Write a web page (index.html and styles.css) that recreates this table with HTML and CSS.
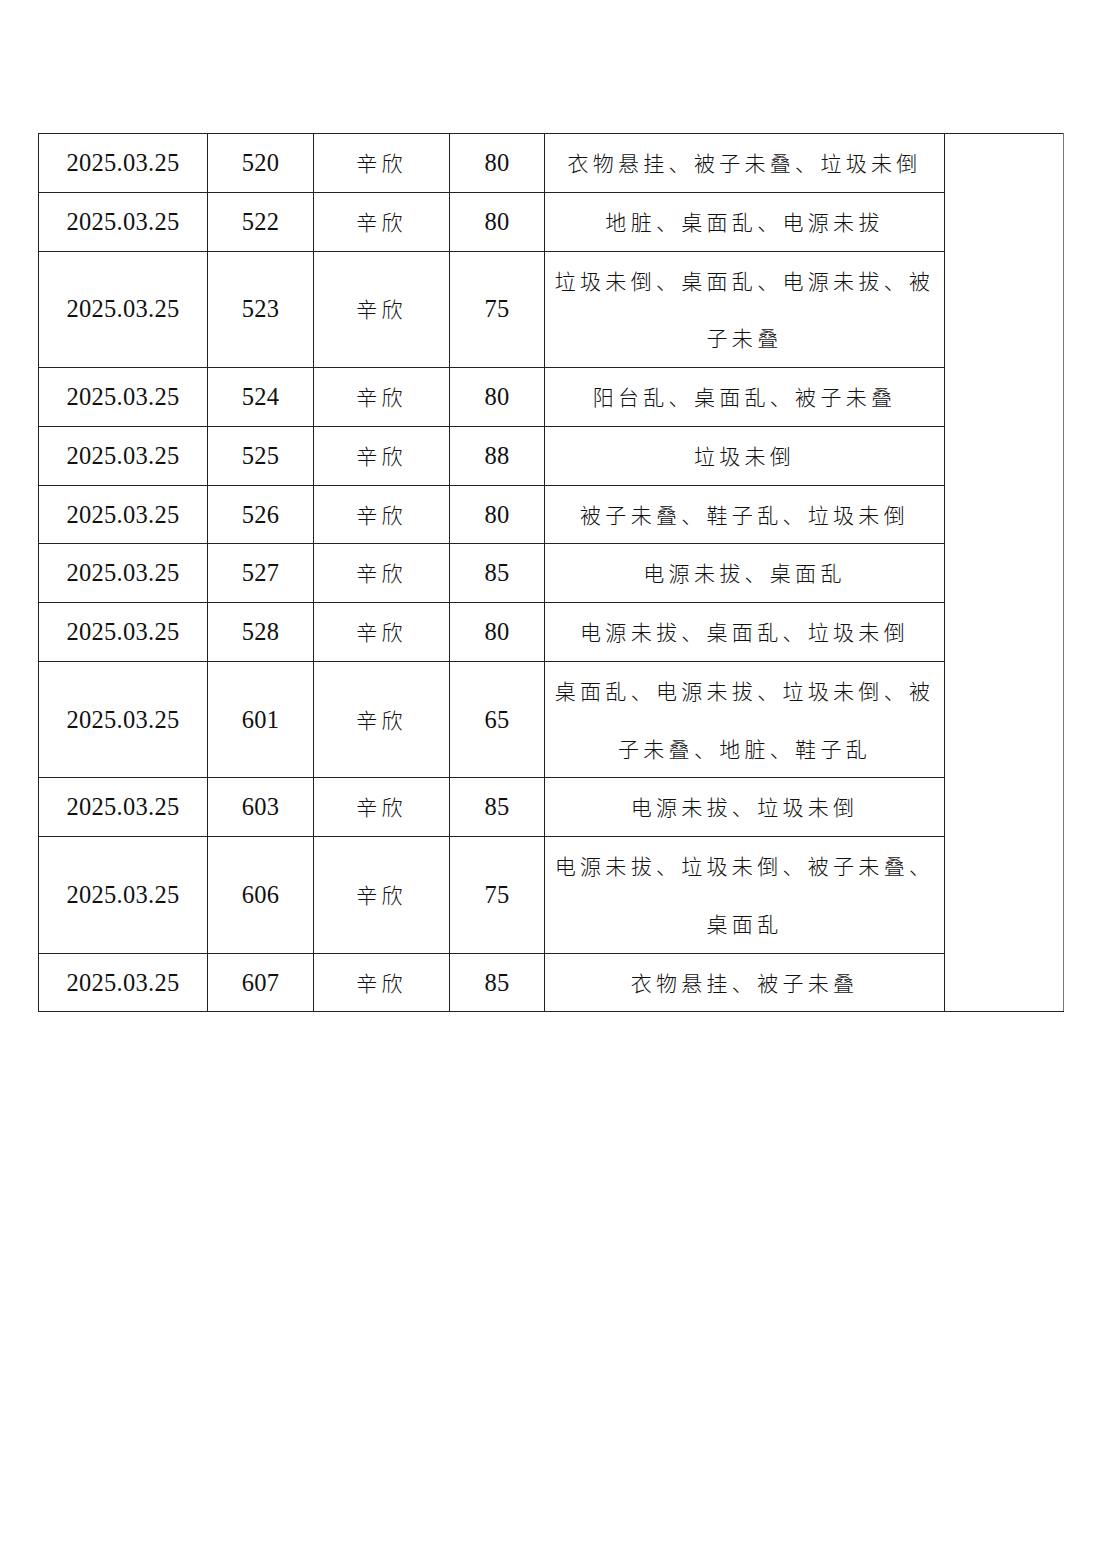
FILE: index.html
```html
<!DOCTYPE html>
<html>
<head>
<meta charset="utf-8">
<title>宿舍检查记录</title>
<link rel="stylesheet" href="styles.css">
</head>
<body>
<div class="page">
<table class="sheet">
  <colgroup>
    <col class="c-date"><col class="c-room"><col class="c-name"><col class="c-score"><col class="c-note"><col class="c-extra">
  </colgroup>
  <tbody>
    <tr><td class="num">2025.03.25</td><td class="num">520</td><td class="cjk">辛欣</td><td class="num">80</td><td class="cjk note">衣物悬挂、被子未叠、垃圾未倒</td><td class="extra" rowspan="12"></td></tr>
    <tr><td class="num">2025.03.25</td><td class="num">522</td><td class="cjk">辛欣</td><td class="num">80</td><td class="cjk note">地脏、桌面乱、电源未拔</td></tr>
    <tr><td class="num">2025.03.25</td><td class="num">523</td><td class="cjk">辛欣</td><td class="num">75</td><td class="cjk note">垃圾未倒、桌面乱、电源未拔、被子未叠</td></tr>
    <tr><td class="num">2025.03.25</td><td class="num">524</td><td class="cjk">辛欣</td><td class="num">80</td><td class="cjk note">阳台乱、桌面乱、被子未叠</td></tr>
    <tr><td class="num">2025.03.25</td><td class="num">525</td><td class="cjk">辛欣</td><td class="num">88</td><td class="cjk note">垃圾未倒</td></tr>
    <tr><td class="num">2025.03.25</td><td class="num">526</td><td class="cjk">辛欣</td><td class="num">80</td><td class="cjk note">被子未叠、鞋子乱、垃圾未倒</td></tr>
    <tr><td class="num">2025.03.25</td><td class="num">527</td><td class="cjk">辛欣</td><td class="num">85</td><td class="cjk note">电源未拔、桌面乱</td></tr>
    <tr><td class="num">2025.03.25</td><td class="num">528</td><td class="cjk">辛欣</td><td class="num">80</td><td class="cjk note">电源未拔、桌面乱、垃圾未倒</td></tr>
    <tr><td class="num">2025.03.25</td><td class="num">601</td><td class="cjk">辛欣</td><td class="num">65</td><td class="cjk note">桌面乱、电源未拔、垃圾未倒、被子未叠、地脏、鞋子乱</td></tr>
    <tr><td class="num">2025.03.25</td><td class="num">603</td><td class="cjk">辛欣</td><td class="num">85</td><td class="cjk note">电源未拔、垃圾未倒</td></tr>
    <tr><td class="num">2025.03.25</td><td class="num">606</td><td class="cjk">辛欣</td><td class="num">75</td><td class="cjk note">电源未拔、垃圾未倒、被子未叠、桌面乱</td></tr>
    <tr><td class="num">2025.03.25</td><td class="num">607</td><td class="cjk">辛欣</td><td class="num">85</td><td class="cjk note">衣物悬挂、被子未叠</td></tr>
  </tbody>
</table>
</div>
</body>
</html>
```
FILE: styles.css
```css
html, body {
  margin: 0;
  padding: 0;
  background: #ffffff;
}

.page {
  padding: 133px 0 0 38px;
}

.sheet {
  border-collapse: collapse;
  table-layout: fixed;
  width: 1025px;
  color: #111;
}

.c-date { width: 169px; }
.c-room { width: 106px; }
.c-name { width: 136px; }
.c-score { width: 95px; }
.c-note { width: 400px; }
.c-extra { width: 119px; }

.sheet td {
  border: 1px solid #222;
  padding: 0;
  text-align: center;
  vertical-align: middle;
  line-height: 57.75px;
}

.num {
  font-family: "Liberation Serif", "Times New Roman", serif;
  font-size: 24.5px;
  letter-spacing: 0.3px;
}

.cjk {
  font-family: "Noto Sans CJK SC", sans-serif;
  font-weight: 300;
  font-size: 21px;
  letter-spacing: 4.3px;
}

.note {
  padding: 0 8px !important;
}

.extra {
  border-right-color: #777 !important;
}
```
